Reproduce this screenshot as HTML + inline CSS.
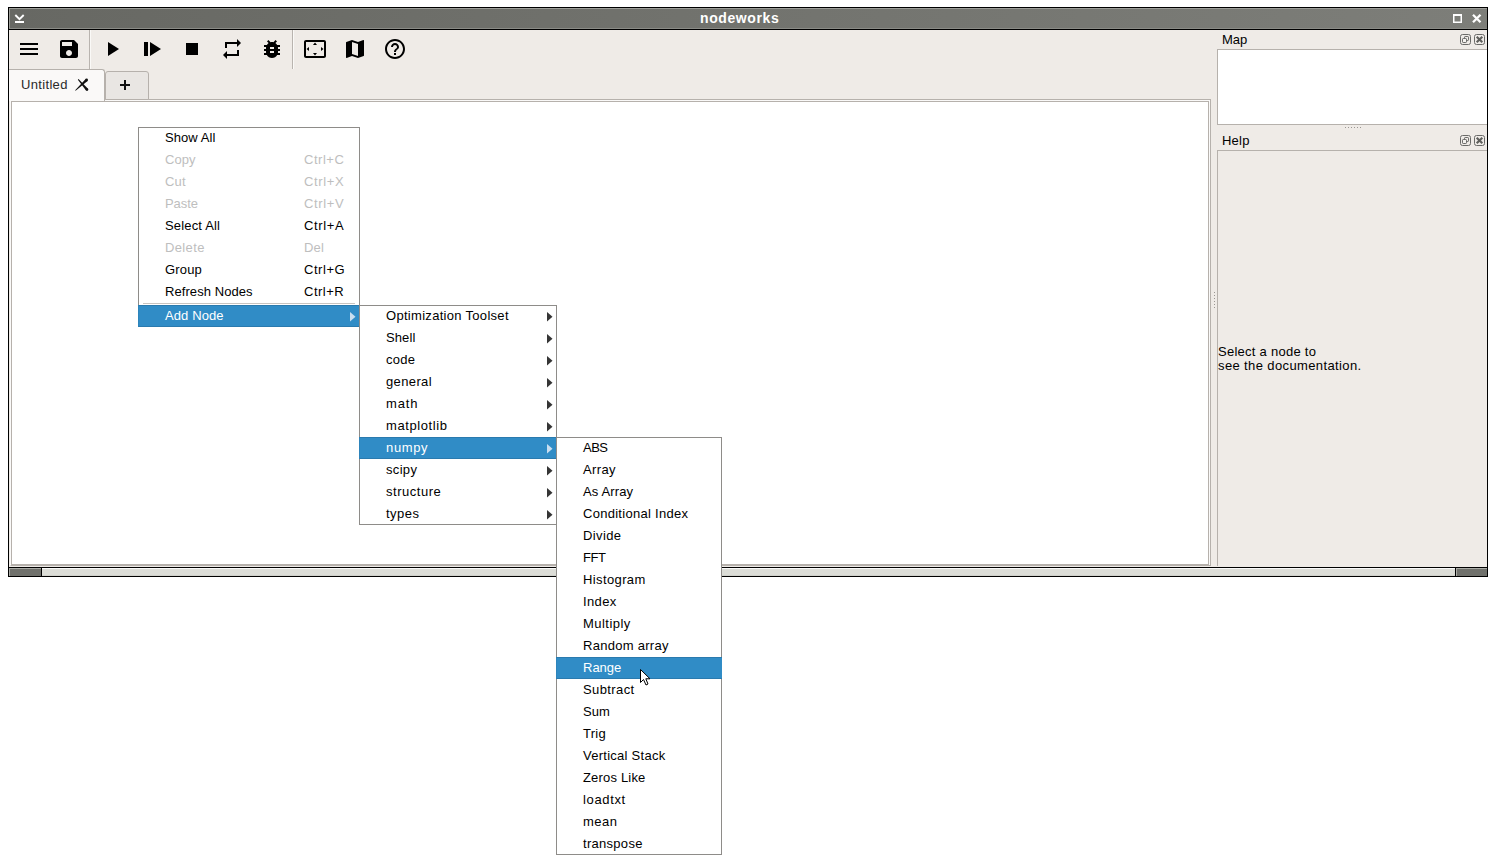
<!DOCTYPE html>
<html><head><meta charset="utf-8">
<style>
*{box-sizing:border-box;margin:0;padding:0}
html,body{width:1497px;height:864px;overflow:hidden;background:#fff}
body{position:relative;font-family:"Liberation Sans",sans-serif;font-size:13px;color:#000}
.a{position:absolute}
.t{position:absolute;white-space:nowrap;line-height:16px;height:16px}
#win{left:8px;top:7px;width:1480px;height:570px;background:#efebe7;border:1px solid #000}
#title{left:9px;top:8px;width:1478px;height:21px;background:linear-gradient(to right,#676863,#7d7e79);border-top:1px solid #9d9e99;border-left:1px solid #9d9e99;border-bottom:1px solid #8a8b86}
#titleline{left:8px;top:29px;width:1479px;height:1px;background:#000}
#bottom{left:8px;top:567px;width:1480px;height:10px;background:#000}
.seg{position:absolute;top:568px;height:8px}
.tbsep{position:absolute;top:30px;width:1px;height:39px;background:#b9b4af}
.tbsep2{position:absolute;top:30px;width:1px;height:39px;background:#faf9f7}
.menu{position:absolute;background:#fff;border:1px solid #8e8c89}
.mi{position:absolute;white-space:nowrap;line-height:16px;height:16px}
.hl{position:absolute;background:#308cc6;border-top:1px solid #2a7aae;border-bottom:1px solid #2a7aae;border-left:1px solid #2d84bb}
.dis{color:#bebebe}
.arr{position:absolute;width:5.5px;height:9.5px;background:#353535;clip-path:polygon(0 0,100% 50%,0 100%)}
.arr.w{background:#c9def0}
</style></head><body>
<div id="win" class="a"></div>
<div id="title" class="a"></div>
<div id="titleline" class="a"></div>
<div class="t" style="left:700px;top:10px;color:#fff;font-weight:bold;font-size:14px;letter-spacing:0.6px">nodeworks</div>
<svg class="a" style="left:8px;top:8px" width="24" height="21"><path d="M7.3 7 L11.5 11.2 L15.7 7" stroke="#fff" stroke-width="1.9" fill="none"/><rect x="7" y="13" width="9" height="2" fill="#fff"/></svg>
<svg class="a" style="left:1450px;top:8px" width="37" height="21"><rect x="3.75" y="6.75" width="7.5" height="7.5" stroke="#fff" stroke-width="1.5" fill="none"/><rect x="3" y="6" width="9" height="2" fill="#fff"/><path d="M23 6.8 L30.5 14.3 M30.5 6.8 L23 14.3" stroke="#fff" stroke-width="2.3"/></svg>

<div id="bottom" class="a"></div>
<div class="seg" style="left:9px;width:32px;background:#70716c;border-top:1px solid #a9aaa5;border-left:1px solid #a9aaa5"></div>
<div class="seg" style="left:42px;width:1413px;background:#dcddd7;border-top:1px solid #fafafa;border-bottom:1px solid #cfd0ca"></div>
<div class="seg" style="left:1456px;width:31px;background:#70716c;border-top:1px solid #a9aaa5;border-left:1px solid #a9aaa5"></div>

<div class="tbsep" style="left:89px"></div><div class="tbsep2" style="left:90px"></div>
<div class="tbsep" style="left:292px"></div><div class="tbsep2" style="left:293px"></div>

<div class="a" style="left:10px;top:99px;width:1201px;height:467px;border:1px solid #b6b1ac;border-left-color:#faf9f8;background:#faf9f8"></div>
<div class="a" style="left:11px;top:101px;width:1198px;height:464px;border:1px solid #b6b1ac;background:#fff"></div>
<div class="a" style="left:9px;top:69px;width:96px;height:32px;background:#faf9f8;border:1px solid #b6b1ac;border-left:none;border-bottom:none;border-radius:0 3px 0 0"></div>
<div class="a" style="left:105px;top:71px;width:44px;height:29px;background:#e9e6e3;border:1px solid #b6b1ac;border-radius:3px 3px 0 0"></div>

<div class="t" style="left:21px;top:77px;letter-spacing:0.33px;color:#2a2a2a">Untitled</div>
<svg class="a" style="left:72px;top:76px" width="20" height="18"><path d="M5.86 3.69 L14.02 14.45 L15.98 12.75 L6.54 3.11Z M13.65 2.97 L3.16 14.14 L3.64 14.66 L15.55 5.03Z" fill="#111"/><circle cx="15.00" cy="13.60" r="1.3" fill="#111"/><circle cx="14.60" cy="4.00" r="1.4" fill="#111"/></svg>
<div class="a" style="left:120px;top:84px;width:10px;height:2px;background:#111"></div>
<div class="a" style="left:124px;top:80px;width:2px;height:10px;background:#111"></div>

<div class="t" style="left:1222px;top:32px;letter-spacing:0.02px">Map</div>
<div class="a" style="left:1217px;top:49px;width:270px;height:76px;background:#fff;border:1px solid #b6b1ac;border-right:none"></div>
<div class="t" style="left:1222px;top:133px;letter-spacing:0.21px">Help</div>
<div class="a" style="left:1217px;top:150px;width:270px;height:416px;border:1px solid #b6b1ac;border-right:none;border-bottom:none"></div>
<div class="t" style="left:1218px;top:344px;letter-spacing:0.26px">Select a node to</div>
<div class="t" style="left:1218px;top:358px;letter-spacing:0.38px">see the documentation.</div>
<svg class="a" style="left:17px;top:37px" width="24" height="24" viewBox="0 0 24 24"><path d="M3 18h18v-2H3v2zm0-5h18v-2H3v2zm0-7v2h18V6H3z"/></svg>
<svg class="a" style="left:57px;top:37px" width="24" height="24" viewBox="0 0 24 24"><path d="M17 3H5c-1.11 0-2 .9-2 2v14c0 1.1.89 2 2 2h14c1.1 0 2-.9 2-2V7l-4-4zm-5 16c-1.66 0-3-1.34-3-3s1.34-3 3-3 3 1.34 3 3-1.34 3-3 3zm3-10H5V5h10v4z"/></svg>
<svg class="a" style="left:100px;top:37px" width="24" height="24" viewBox="0 0 24 24"><path d="M8 5v14l11-7z"/></svg>
<svg class="a" style="left:140px;top:37px" width="24" height="24" viewBox="0 0 24 24"><path d="M4 5h4v14H4z M10 5v14l11-7z"/></svg>
<svg class="a" style="left:180px;top:37px" width="24" height="24" viewBox="0 0 24 24"><path d="M6 6h12v12H6z"/></svg>
<svg class="a" style="left:220px;top:37px" width="24" height="24" viewBox="0 0 24 24"><path d="M7 7h10v3l4-4-4-4v3H5v6h2V7zm10 10H7v-3l-4 4 4 4v-3h12v-6h-2v4z"/></svg>
<svg class="a" style="left:260px;top:37px" width="24" height="24" viewBox="0 0 24 24"><path d="M20 8h-2.81c-.45-.78-1.07-1.45-1.82-1.96L17 4.41 15.59 3l-2.17 2.17C12.96 5.06 12.49 5 12 5c-.49 0-.96.06-1.41.17L8.41 3 7 4.41l1.62 1.63C7.88 6.55 7.26 7.22 6.81 8H4v2h2.09c-.05.33-.09.66-.09 1v1H4v2h2v1c0 .34.04.67.09 1H4v2h2.81c1.04 1.79 2.97 3 5.19 3s4.15-1.21 5.19-3H20v-2h-2.09c.05-.33.09-.66.09-1v-1h2v-2h-2v-1c0-.34-.04-.67-.09-1H20V8zm-6 8h-4v-2h4v2zm0-4h-4v-2h4v2z"/></svg>
<svg class="a" style="left:303px;top:37px" width="24" height="24" viewBox="0 0 24 24"><path d="M12.01 5.5L10 8h4l-1.99-2.5zM18 10v4l2.5-1.99L18 10zM6 10l-2.5 2.01L6 14v-4zm8 6h-4l2.01 2.5L14 16zm7-13H3c-1.1 0-2 .9-2 2v14c0 1.1.9 2 2 2h18c1.1 0 2-.9 2-2V5c0-1.1-.9-2-2-2zm0 16.01H3V4.99h18v14.02z"/></svg>
<svg class="a" style="left:343px;top:37px" width="24" height="24" viewBox="0 0 24 24"><path d="M20.5 3l-.16.03L15 5.1 9 3 3.36 4.9c-.21.07-.36.25-.36.48V20.5c0 .28.22.5.5.5l.16-.03L9 18.9l6 2.1 5.64-1.9c.21-.07.36-.25.36-.48V3.5c0-.28-.22-.5-.5-.5zM15 19l-6-2.11V5l6 2.11V19z"/></svg>
<svg class="a" style="left:383px;top:37px" width="24" height="24" viewBox="0 0 24 24"><path d="M11 18h2v-2h-2v2zm1-16C6.48 2 2 6.48 2 12s4.48 10 10 10 10-4.48 10-10S17.52 2 12 2zm0 18c-4.41 0-8-3.59-8-8s3.59-8 8-8 8 3.59 8 8-3.59 8-8 8zm0-14c-2.21 0-4 1.79-4 4h2c0-1.1.9-2 2-2s2 .9 2 2c0 2-3 1.75-3 5h2c0-2.25 3-2.5 3-5 0-2.21-1.790-4-4-4z"/></svg>

<svg class="a" style="left:1459px;top:33px" width="28" height="13"><rect x="1.5" y="1.5" width="10" height="10" rx="2" stroke="#6a6a68" fill="none"/><rect x="5.5" y="3.5" width="4" height="4" rx="0.7" stroke="#6a6a68" fill="none"/><rect x="3.5" y="5.5" width="4" height="4" rx="0.7" stroke="#6a6a68" fill="#f5f3f0"/><rect x="15.5" y="1.5" width="10" height="10" rx="2" stroke="#6a6a68" fill="none"/><path d="M17.7 3.7 L23.3 9.3 M23.3 3.7 L17.7 9.3" stroke="#5f5f5c" stroke-width="2.1"/></svg>
<svg class="a" style="left:1459px;top:134px" width="28" height="13"><rect x="1.5" y="1.5" width="10" height="10" rx="2" stroke="#6a6a68" fill="none"/><rect x="5.5" y="3.5" width="4" height="4" rx="0.7" stroke="#6a6a68" fill="none"/><rect x="3.5" y="5.5" width="4" height="4" rx="0.7" stroke="#6a6a68" fill="#f5f3f0"/><rect x="15.5" y="1.5" width="10" height="10" rx="2" stroke="#6a6a68" fill="none"/><path d="M17.7 3.7 L23.3 9.3 M23.3 3.7 L17.7 9.3" stroke="#5f5f5c" stroke-width="2.1"/></svg>
<svg class="a" style="left:1344px;top:126px" width="20" height="3"><g fill="#9a9692"><rect x="1" y="1" width="1" height="1"/><rect x="4" y="1" width="1" height="1"/><rect x="7" y="1" width="1" height="1"/><rect x="10" y="1" width="1" height="1"/><rect x="13" y="1" width="1" height="1"/><rect x="16" y="1" width="1" height="1"/></g></svg>
<svg class="a" style="left:1213px;top:291px" width="3" height="20"><g fill="#9a9692"><rect x="1" y="1" width="1" height="1"/><rect x="1" y="4" width="1" height="1"/><rect x="1" y="7" width="1" height="1"/><rect x="1" y="10" width="1" height="1"/><rect x="1" y="13" width="1" height="1"/><rect x="1" y="16" width="1" height="1"/></g></svg>

<div class="menu" style="left:138px;top:127px;width:222px;height:200px"></div>
<div class="a" style="left:143px;top:303px;width:212px;height:1px;background:#c8c4c0"></div>
<div class="hl" style="left:138px;top:305px;width:222px;height:22px"></div>
<div class="mi" style="left:165px;top:130px;letter-spacing:0.07px">Show All</div>
<div class="mi" style="left:165px;top:152px;letter-spacing:0.03px;color:#bebebe">Copy</div>
<div class="mi" style="left:304px;top:152px;letter-spacing:0.52px;color:#bebebe">Ctrl+C</div>
<div class="mi" style="left:165px;top:174px;letter-spacing:0.23px;color:#bebebe">Cut</div>
<div class="mi" style="left:304px;top:174px;letter-spacing:0.63px;color:#bebebe">Ctrl+X</div>
<div class="mi" style="left:165px;top:196px;letter-spacing:-0.08px;color:#bebebe">Paste</div>
<div class="mi" style="left:304px;top:196px;letter-spacing:0.63px;color:#bebebe">Ctrl+V</div>
<div class="mi" style="left:165px;top:218px;letter-spacing:0.17px">Select All</div>
<div class="mi" style="left:304px;top:218px;letter-spacing:0.63px">Ctrl+A</div>
<div class="mi" style="left:165px;top:240px;letter-spacing:0.37px;color:#bebebe">Delete</div>
<div class="mi" style="left:304px;top:240px;letter-spacing:0.23px;color:#bebebe">Del</div>
<div class="mi" style="left:165px;top:262px;letter-spacing:0.17px">Group</div>
<div class="mi" style="left:304px;top:262px;letter-spacing:0.56px">Ctrl+G</div>
<div class="mi" style="left:165px;top:284px;letter-spacing:0.07px">Refresh Nodes</div>
<div class="mi" style="left:304px;top:284px;letter-spacing:0.51px">Ctrl+R</div>
<div class="mi" style="left:165px;top:308px;letter-spacing:0.11px;color:#fff">Add Node</div>
<div class="arr w" style="left:350px;top:312px"></div>
<div class="menu" style="left:359px;top:305px;width:198px;height:220px"></div>
<div class="hl" style="left:359px;top:437px;width:198px;height:22px"></div>
<div class="mi" style="left:386px;top:308px;letter-spacing:0.30px">Optimization Toolset</div>
<div class="arr" style="left:547px;top:312px"></div>
<div class="mi" style="left:386px;top:330px;letter-spacing:0.09px">Shell</div>
<div class="arr" style="left:547px;top:334px"></div>
<div class="mi" style="left:386px;top:352px;letter-spacing:0.25px">code</div>
<div class="arr" style="left:547px;top:356px"></div>
<div class="mi" style="left:386px;top:374px;letter-spacing:0.37px">general</div>
<div class="arr" style="left:547px;top:378px"></div>
<div class="mi" style="left:386px;top:396px;letter-spacing:0.82px">math</div>
<div class="arr" style="left:547px;top:400px"></div>
<div class="mi" style="left:386px;top:418px;letter-spacing:0.60px">matplotlib</div>
<div class="arr" style="left:547px;top:422px"></div>
<div class="mi" style="left:386px;top:440px;letter-spacing:0.65px;color:#fff">numpy</div>
<div class="arr w" style="left:547px;top:444px"></div>
<div class="mi" style="left:386px;top:462px;letter-spacing:0.32px">scipy</div>
<div class="arr" style="left:547px;top:466px"></div>
<div class="mi" style="left:386px;top:484px;letter-spacing:0.52px">structure</div>
<div class="arr" style="left:547px;top:488px"></div>
<div class="mi" style="left:386px;top:506px;letter-spacing:0.50px">types</div>
<div class="arr" style="left:547px;top:510px"></div>
<div class="menu" style="left:556px;top:437px;width:166px;height:418px"></div>
<div class="hl" style="left:556px;top:657px;width:166px;height:22px"></div>
<div class="mi" style="left:583px;top:440px;letter-spacing:-0.50px">ABS</div>
<div class="mi" style="left:583px;top:462px;letter-spacing:0.37px">Array</div>
<div class="mi" style="left:583px;top:484px;letter-spacing:0.14px">As Array</div>
<div class="mi" style="left:583px;top:506px;letter-spacing:0.28px">Conditional Index</div>
<div class="mi" style="left:583px;top:528px;letter-spacing:0.38px">Divide</div>
<div class="mi" style="left:583px;top:550px;letter-spacing:-0.50px">FFT</div>
<div class="mi" style="left:583px;top:572px;letter-spacing:0.38px">Histogram</div>
<div class="mi" style="left:583px;top:594px;letter-spacing:0.36px">Index</div>
<div class="mi" style="left:583px;top:616px;letter-spacing:0.47px">Multiply</div>
<div class="mi" style="left:583px;top:638px;letter-spacing:0.28px">Random array</div>
<div class="mi" style="left:583px;top:660px;letter-spacing:-0.00px;color:#fff">Range</div>
<div class="mi" style="left:583px;top:682px;letter-spacing:0.39px">Subtract</div>
<div class="mi" style="left:583px;top:704px;letter-spacing:0.09px">Sum</div>
<div class="mi" style="left:583px;top:726px;letter-spacing:0.28px">Trig</div>
<div class="mi" style="left:583px;top:748px;letter-spacing:0.26px">Vertical Stack</div>
<div class="mi" style="left:583px;top:770px;letter-spacing:0.18px">Zeros Like</div>
<div class="mi" style="left:583px;top:792px;letter-spacing:0.64px">loadtxt</div>
<div class="mi" style="left:583px;top:814px;letter-spacing:0.50px">mean</div>
<div class="mi" style="left:583px;top:836px;letter-spacing:0.29px">transpose</div>
<svg class="a" style="left:639px;top:668px" width="14" height="20"><path d="M1.5 1.5 L1.5 14.5 L4.5 11.5 L7 17 L9 16 L6.8 10.8 L11 10.8 Z" fill="#fff" stroke="#000" stroke-width="1" stroke-linejoin="miter"/></svg>
</body></html>
